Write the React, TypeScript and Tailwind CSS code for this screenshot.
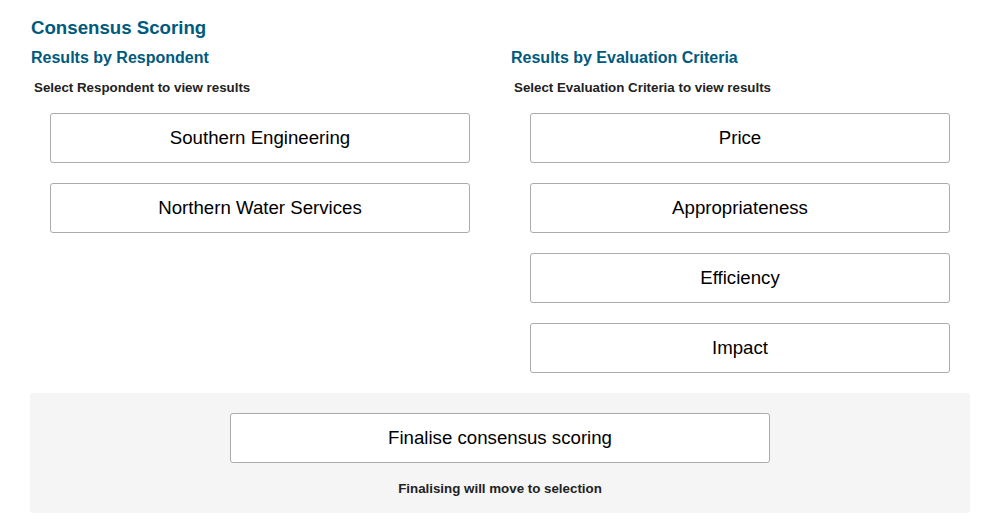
const respondents = ["Southern Engineering", "Northern Water Services"];
const criteria = ["Price", "Appropriateness", "Efficiency", "Impact"];

function OptionButton({ label }: { label: string }) {
  return (
    <button className="h-[50px] w-full rounded-[3px] border border-[#ababab] bg-white text-[18.67px] text-black">
      {label}
    </button>
  );
}

function ResultsColumn({ title, hint, items }: { title: string; hint: string; items: string[] }) {
  return (
    <div className="flex-1">
      <h2 className="pl-[1px] text-[16px] leading-[20px] font-bold text-[#005a7e]">{title}</h2>
      <p className="mt-[12px] pl-[4px] text-[13.33px] leading-[16px] font-bold text-[#222]">{hint}</p>
      <div className="mt-[17px] flex flex-col gap-[20px] px-[20px]">
        {items.map((item) => (
          <OptionButton key={item} label={item} />
        ))}
      </div>
    </div>
  );
}

export default function App() {
  return (
    <div className="min-h-screen w-full bg-white px-[30px] pt-[16px] font-['Liberation_Sans',Arial,sans-serif]">
      <h1 className="pl-[1px] text-[18.67px] leading-[24px] font-bold text-[#005a7e]">Consensus Scoring</h1>
      <div className="mt-[8px] flex w-[940px] gap-[20px]">
        <ResultsColumn title="Results by Respondent" hint="Select Respondent to view results" items={respondents} />
        <ResultsColumn title="Results by Evaluation Criteria" hint="Select Evaluation Criteria to view results" items={criteria} />
      </div>
      <div className="mt-[20px] flex w-[940px] flex-col items-center rounded-[3px] bg-[#f5f5f5] pt-[20px] pb-[16px]">
        <button className="h-[50px] w-[540px] rounded-[3px] border border-[#ababab] bg-white text-[18.67px] text-black">
          Finalise consensus scoring
        </button>
        <p className="mt-[18px] text-[13.33px] leading-[16px] font-bold text-[#222]">Finalising will move to selection</p>
      </div>
    </div>
  );
}
